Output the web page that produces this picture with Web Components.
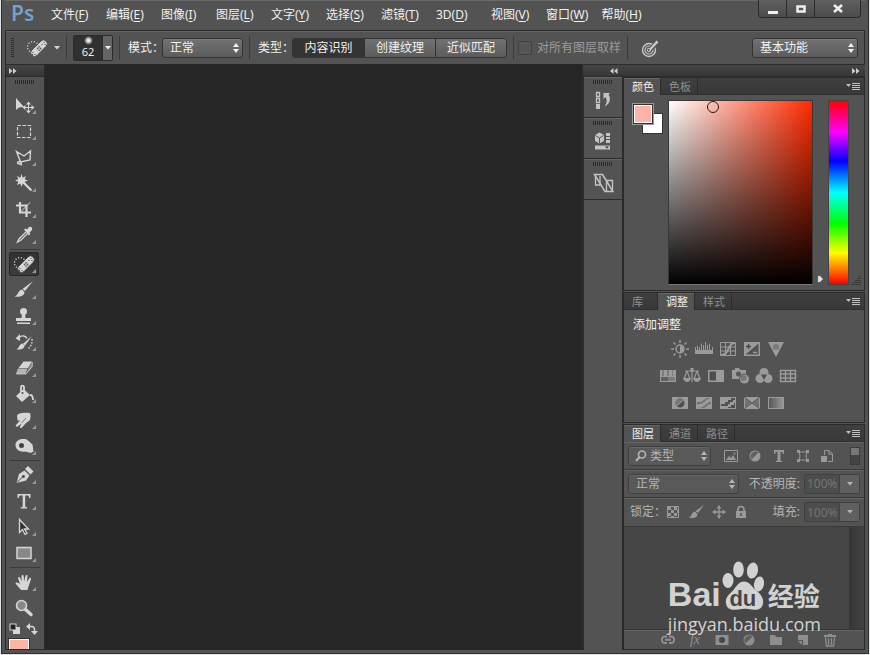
<!DOCTYPE html>
<html lang="zh-CN">
<head>
<meta charset="utf-8">
<title>Ps</title>
<style>
html, body { height: 100%; }
body {
  margin: 0;
  background: #dfe3e8;
  color: #f0f0f0;
  font: 12px/16px "Noto Sans", "Noto Sans CJK SC", sans-serif;
  --face: #535353;
  --edge: #2b2b2b;
  --light: #666;
}
</style>
</head>
<body>
<ps-app></ps-app>

<script>
// name: [width, height, markup]
const ICONS = {
  // tools, drawn in the 30x26 tool cell
  move: [30, 26, '<path d="M7 6v12l3-2.500 5-.5z"/><path d="M19.500 10.500v10M14.500 15.500h10" stroke="currentColor"/><path d="M19.500 9.500l2.500 3h-5zM19.500 21.500l2.500-3h-5zM13.500 15.500l3-2.500v5zM25.500 15.500l-3-2.500v5z"/>'],
  marquee: [30, 26, '<rect x="8.500" y="7.500" width="13" height="12" fill="none" stroke="currentColor" stroke-width="1.200" stroke-dasharray="3.500 1.500"/>'],
  lasso: [30, 26, '<path d="M7.500 7.500l7.500 4.500 6.500-5-.5 9-9.500 2zM11 18c-2.500-1-3.500 1.500-1 2 2 .3 3-2.500 1-2zM12 18.500l.5 3" fill="none" stroke="currentColor" stroke-width="1.400"/>'],
  wand: [30, 26, '<path d="M12.500 4l1.200 3.700L17 6l-1.300 3.300 3.300 1.200-3.300 1.200L17 15l-3.300-1.500-1.200 3.500-1.200-3.500L8 15l1.300-3.300L6 10.500l3.300-1.200L8 6l3.300 1.700z"/><path d="M15 13l7.500 7.500" stroke="currentColor" stroke-width="2.200"/>'],
  crop: [30, 26, '<path d="M11 6v10.500h11M7 9.500h10.500V21" fill="none" stroke="currentColor" stroke-width="2.200"/><path d="M12 15.500L21 6.500" stroke="currentColor"/>'],
  dropper: [30, 26, '<path d="M17 10l-7 7-1.500 3 3-1.500 7-7" fill="none" stroke="currentColor" stroke-width="1.300"/><path d="M15 7.500l1.500-1 1.500 1 2-2.500c2-1 4 1 3 3l-2.500 2.500.8 1.500-1.300 1.500z"/>'],
  heal: [30, 26, '<circle cx="11" cy="12" r="5.500" fill="none" stroke="currentColor" stroke-width="1.200" stroke-dasharray="1.200 1.700"/><rect x="7" y="9.500" width="20" height="7.500" rx="3.500" transform="rotate(-45 17 13.250)" stroke="#3d3d3d" stroke-width=".8"/><path d="M14 13l3-3 3.500 3.500-3 3z" fill="#b0b0b0"/><path d="M17 11.500v1M15.500 13.200v1M18.500 13.200v1M17 14.800v1M22 7v1M20 9v1M23 9v1M11 17v1M13 19v1M10.500 19v1" stroke="#444"/>'],
  brush: [30, 26, '<path d="M24 4l-8 10-2.500-2z"/><path d="M13 12.500l2.500 2.500c0 4-5 5.500-10 4.500 4-1 3.500-6.500 7.500-7z"/>'],
  stamp: [30, 26, '<circle cx="14.500" cy="8.500" r="3.500"/><path d="M13 11h3l.5 4h5.500v3H7v-3h5.500zM8 19.500h13V21H8z"/>'],
  history: [30, 26, '<path d="M23 7l-7 9.500-2-1.800z"/><path d="M13.500 14.500l2.200 2c-.5 3.500-4 4.500-8.500 4 3-1 3-5.500 6.300-6z"/><path d="M10 8.500c3-2.500 7-2 8 1" fill="none" stroke="currentColor" stroke-width="1.400"/><path d="M23 10c.5 4-1 7.500-4.500 10.500" fill="none" stroke="currentColor" stroke-width="1.500" stroke-dasharray="1.500 1.500"/><path d="M6.500 9.500l4.500-4.500v7z"/>'],
  eraser: [30, 26, '<path d="M14.500 6.500h8.500l-4 6.500H9.500z"/><path d="M9 13.500h9.500L16.500 19H7z" fill="#b4b4b4"/><path d="M19.500 13L23.500 7v4.500L17.500 19z" fill="#8a8a8a"/><path d="M7.500 19h9.500l6.200-7.500V7" fill="none" stroke="currentColor" stroke-width=".8"/>'],
  bucket: [30, 26, '<path d="M14.500 8l6.500 6-8 7-6-6z"/><path d="M12 12V6.500c0-2.500 3-2.500 3 0V12M21 14c2 0 3 1 3 5" fill="none" stroke="currentColor" stroke-width="1.800"/><circle cx="13.500" cy="12" r="1" fill="#444"/>'],
  smudge: [30, 26, '<path d="M8 9c1-3 5-3.500 13-3 .8 3 .8 5-.5 7.500L17 16l-4.500 5-1.800-.3 1.600-4-4.300 3.300L6.500 18.500l4.500-5H8.500z"/><path d="M17 11l-4.500 5" stroke="#777"/>'],
  sponge: [30, 26, '<path d="M6.500 12c0-4 4-6.500 8-6 4 0 5 2 9 5.500l1 7-3 1.500-5-1.500c-5 1-10-1.500-10-6.500z"/><circle cx="12.500" cy="12.500" r="2.500" fill="#444"/>'],
  pen: [30, 26, '<path d="M7.500 21l2.500-9 5.500-3.500 5 5-3.500 5z"/><path d="M16 7l3-3 5.500 5.500-3 3z"/><path d="M8 20.500l6-6" stroke="#444"/><circle cx="14.500" cy="14.500" r="1.400" fill="#444"/>'],
  type: [30, 26, '<path d="M8.500 6h13v4h-1.200c-.3-2-1-2.500-2.300-2.500h-1.800V18c0 1 .5 1.200 2 1.300v1.200h-6.500v-1.200c1.600-.1 2-.3 2-1.300V7.500H12c-1.400 0-2 .5-2.300 2.500H8.500z"/>'],
  select: [30, 26, '<path d="M10.500 5.500v13l3-3 2.500 5 2-1-2.500-4.500h4z" fill="#333" stroke="currentColor" stroke-width="1.300"/>'],
  rect: [30, 26, '<rect x="8" y="7.500" width="14" height="11" fill="#888" stroke="currentColor" stroke-width="1.500"/>'],
  hand: [30, 26, '<path d="M12 21l-5.500-6.500c0-1.500 2-1.500 4.500.5L9 9c0-1.500 1.800-1.500 2.200 0l1.300 3.500V7c0-1.500 2-1.500 2.200 0l.4 5.200L16.500 7c.3-1.500 2.200-1.300 2 .2L18 13l2.200-3.500c.8-1.300 2.300-.5 1.800.8l-2.500 7.200-1 3.500z"/>'],
  zoom: [30, 26, '<path d="M16.500 14.500l5.500 5" stroke="currentColor" stroke-width="3.500" stroke-linecap="round"/><circle cx="12.500" cy="10.500" r="5" fill="#888" stroke="currentColor" stroke-width="1.600"/>'],
  defaults: [12, 12, '<rect x="4" y="4" width="7" height="7"/><rect x="1" y="1" width="6" height="6" fill="#222" stroke="currentColor"/>'],
  swap: [12, 12, '<path d="M3 3.500h2.500q3 0 3 3V9" fill="none" stroke="currentColor" stroke-width="1.400"/><path d="M0 3.500L4 0v7zM5 8h7l-3.500 4z"/>'],

  // small marks
  caret: [6, 4, '<path d="M0 0h6L3 3.500z"/>'],
  updown: [6, 10, '<path d="M0 4h6L3 0zM0 6h6l-3 4z"/>'],
  left: [8, 6, '<path d="M3.500 0v6L0 3zM7.500 0v6L4 3z"/>'],
  right: [8, 6, '<path d="M0 0v6l3.500-3zM4 0v6l3.500-3z"/>'],
  menu: [14, 10, '<path d="M0 2h5L2.500 5z"/><path d="M6 1.500h8M6 3.500h8M6 5.500h8M6 7.500h8" stroke="currentColor"/>'],
  resize: [10, 10, '<path d="M9 1v1M7 3v1M9 3v1M5 5v1M7 5v1M9 5v1M3 7v1M5 7v1M7 7v1M9 7v1M1 9v1M3 9v1M5 9v1M7 9v1M9 9v1" stroke="#1d1d1d"/>'],
  marker: [7, 8, '<path d="M.5.500H3l3.500 3.500L3 7.500H.5z" stroke="#333" stroke-width=".6"/>'],
  min: [12, 12, '<path d="M1 8h10v3H1z"/>'],
  max: [12, 12, '<path d="M2.500 3.500h7v5h-7z" fill="none" stroke="currentColor" stroke-width="2.500"/>'],
  close: [12, 12, '<path d="M2 2l8 7M10 2L2 9" stroke="currentColor" stroke-width="2.600"/>'],
  target: [20, 20, '<circle cx="8" cy="12" r="6.500" fill="none" stroke="currentColor" stroke-width="1.400"/><circle cx="8" cy="12" r="4" fill="none" stroke="currentColor" stroke-width="1.200"/><circle cx="8" cy="12" r="1.800" fill="none" stroke="currentColor"/><path d="M10 11L17 3.500" stroke="#535353" stroke-width="4.500"/><path d="M8 13l1-3 6.500-7.500 2 1.700-7 7.300z"/>'],

  // collapsed panels
  historyPanel: [22, 22, '<path d="M4.500 2.500h3v4h-3zM4.500 8.500h3v4h-3z" fill="none" stroke="currentColor" stroke-width="1.300"/><path d="M4 14h4v5H4z"/><path d="M11.500 9V3h6.500l-1.500 1.500c2.800 4.500 1.500 9.500-4 12 2.500-3.500 3-6.500 1-9.500z"/>'],
  properties: [22, 22, '<path d="M7.500 1.500L12 4v6l-4.500 2.500L3 10V4z"/><path d="M3.500 4.500l4 2.500 4-2.500M7.500 7v5" fill="none" stroke="#555"/><path d="M14 2h4v3h-4zM14 6h4v2h-4zM14 9h4v3h-4zM3 14.500h15v4H3z"/><path d="M13 15.500h4l-2 2z" fill="#333"/>'],
  paths: [22, 22, '<path d="M2.500 2.500h8l10.500 17h-8z" fill="none" stroke="currentColor" stroke-width="1.500"/><path d="M3.500 3v10H8V4M14.500 8.500h6V18M14.500 9v10" fill="none" stroke="currentColor" stroke-width="1.300"/>'],

  // adjustments
  brightness: [18, 18, '<circle cx="9" cy="9" r="4" fill="none" stroke="currentColor" stroke-width="1.500"/><path d="M9 5v8a4 4 0 000-8z"/><path d="M9 0v3M9 15v3M0 9h3M15 9h3M2.500 2.500l2 2M13.500 13.500l2 2M2.500 15.500l2-2M13.500 4.500l2-2" stroke="currentColor" stroke-width="1.500"/>'],
  levels: [18, 18, '<path d="M0 10h18v4H0z"/><path d="M.5 11V7M2.500 11V5.500M4.500 11V7M6.500 11V3.500M8.500 11V5M10.500 11V2M12.500 11V5M14.500 11V3.500M17.500 11V7" stroke="currentColor"/>'],
  curves: [18, 18, '<path d="M1.500 2.500h15v13h-15zM6.500 3v12M11.500 3v12M2 7h14M2 11h14" fill="none" stroke="currentColor"/><path d="M2 15c9 0 6-12 14-12" fill="none" stroke="currentColor" stroke-width="2"/>'],
  exposure: [18, 18, '<path d="M1 2h16v14H1z"/><path d="M15.500 3.500v11h-13z" fill="#535353"/><path d="M3 6.500h5M5.500 4v5" stroke="#444" stroke-width="1.300"/><path d="M10 12.500h4" stroke="currentColor" stroke-width="1.500"/>'],
  vibrance: [18, 18, '<path d="M1 2h16L9 17z"/><circle cx="9" cy="7" r="3" fill="#7a7a7a"/>'],
  hue: [18, 18, '<path d="M1 3h16v12H1z"/><path d="M3 3h2v6H3zM8 3h2v6H8zM13 3h1v6h-1z" fill="#7c7c7c"/><path d="M2 10h14v4H2z" fill="#606060"/><path d="M9 10h7v4H9z" fill="#7c7c7c"/>'],
  balance: [18, 18, '<path d="M9 1v14M2 4h14M4 4l-3 8M4 4l3 8M14 4l-3 8M14 4l3 8" fill="none" stroke="currentColor" stroke-width="1.200"/><path d="M7.500 1h3v4h-3zM0 11h8q-1 4-4 4t-4-4M10 11h8q-1 4-4 4t-4-4"/>'],
  bw: [18, 18, '<path d="M1 3h16v12H1z"/><path d="M2.500 4.500H9v9H2.500z" fill="#505050"/>'],
  photo: [20, 18, '<path d="M1 3h3V1h4l1 2h6v9H1z"/><circle cx="7.500" cy="7" r="2.500" fill="#555"/><circle cx="13.500" cy="12" r="5" stroke="#555"/><circle cx="12.500" cy="11" r="3" fill="#777"/>'],
  mixer: [18, 18, '<circle cx="9" cy="5.500" r="4.500"/><circle cx="5" cy="11.500" r="4.500"/><circle cx="13" cy="11.500" r="4.500"/><path d="M6 7.500h6L9 13z" fill="#505050"/>'],
  lookup: [18, 18, '<path d="M1.500 3.500h15v11h-15zM6.500 3v12M11.500 3v12M2 7h14M2 11h14" fill="none" stroke="currentColor" stroke-width="1.400"/>'],
  invert: [18, 18, '<path d="M1 3h16v12H1z"/><circle cx="9" cy="9" r="4.500" fill="#505050"/><path d="M5.800 12.200a4.500 4.500 0 016.400-6.400z" fill="#777"/><path d="M3 14L15 4" stroke="currentColor"/>'],
  poster: [18, 18, '<path d="M1 3h16v12H1z"/><path d="M2 8c7 1 7-4 11-4h3c-6 1-6 6-14 6.500zM3 14c7 0 8-6 13-6v2c-4 0-4 4-9 4z" fill="#707070"/>'],
  threshold: [18, 18, '<path d="M1 3h16v12H1z"/><path d="M2 10h4V8h3V6h3V4h4v2h-2v2h-3v2H9v2H2zM9 14v-1h3v-2h3V9h1v5z" fill="#505050"/>'],
  selective: [18, 18, '<path d="M1 3h16v12H1z"/><path d="M2 4l6.500 5L2 14zM16 4L9.500 9l6.500 5z" fill="#707070"/><path d="M1 3l16 12M17 3L1 15" stroke="#5a5a5a"/>'],
  gradient: [18, 18, '<defs><linearGradient id="g"><stop stop-color="#555"/><stop offset="1" stop-color="#999"/></linearGradient></defs><rect x="1.500" y="3.500" width="15" height="11" fill="url(#g)" stroke="currentColor"/>'],

  // layers
  search: [14, 14, '<circle cx="8" cy="5.500" r="3.500" fill="none" stroke="currentColor" stroke-width="1.700"/><path d="M5.500 8L2 12" stroke="currentColor" stroke-width="2"/>'],
  image: [14, 14, '<path d="M.5 1.500h13v11H.5z" fill="none" stroke="currentColor"/><path d="M2 11l3-4 2 2 2-3 3 5z"/><circle cx="10.500" cy="4.500" r="1"/>'],
  half: [14, 14, '<circle cx="7" cy="7" r="5.500"/><path d="M3.500 10.500A5 5 0 0110.500 3.500z" fill="#606060"/>'],
  letter: [14, 14, '<path d="M2 1h10v4h-1c-.3-1.800-.8-2.200-2.500-2.200V11c0 .8.400 1 1.500 1v1H4v-1c1.100 0 1.500-.2 1.500-1V2.800C3.800 2.800 3.300 3.200 3 5H2z"/>'],
  shape: [14, 14, '<path d="M3 3h8l-1 4 1 4H3l1-4z" fill="none" stroke="currentColor"/><path d="M1 1h3v3H1zM10 1h3v3h-3zM1 10h3v3H1zM10 10h3v3h-3z"/>'],
  smart: [14, 14, '<path d="M4.500 6V1.500H9L12.500 5v7.500H8M9 1.500V5h3.500" fill="none" stroke="currentColor"/><path d="M1 7h6v6H1z"/>'],
  checker: [14, 14, '<path d="M1.500 1.500h11v11h-11z" fill="none" stroke="currentColor"/><path d="M2 2h3v3H2zM8 2h3v3H8zM5 5h3v3H5zM2 8h3v3H2zM8 8h3v3H8zM11 5h2v3h-2zM5 11h3v2H5z"/>'],
  paint: [16, 14, '<path d="M16 0l-6 8-2.500-2z"/><path d="M7 6.500L9.500 9c0 4-5 4.500-9 4 3-1 3-6 6.500-6.500z"/>'],
  pan: [14, 14, '<path d="M7 2v10M2 7h10" stroke="currentColor" stroke-width="1.300"/><path d="M7 0l2.500 3.500h-5zM7 14l2.500-3.500h-5zM0 7l3.500-2.500v5zM14 7l-3.500-2.500v5z"/>'],
  lock: [14, 14, '<path d="M2 6h10v7H2z"/><path d="M4 6.500V4.500a3 3 0 016 0v2" fill="none" stroke="currentColor" stroke-width="1.700"/><path d="M7 8v3" stroke="#505050" stroke-width="1.500"/>'],
  link: [14, 14, '<path d="M6 3.500H4a3.200 3.200 0 000 6.500h2M8 3.500h2a3.200 3.200 0 010 6.500H8M4 6.700h6" fill="none" stroke="currentColor" stroke-width="1.900"/>'],
  mask: [14, 14, '<path d="M.5 2h13v10H.5z"/><circle cx="7" cy="7" r="3" fill="#484848"/>'],
  folder: [14, 14, '<path d="M1 2h5l1 2h6v8H1z"/>'],
  page: [14, 14, '<path d="M2 2h10v10H7V7H2z"/><path d="M2 8h4v4z"/>'],
  trash: [14, 14, '<path d="M5 1h4v1h4v2H1V2h4z"/><path d="M2.500 4.500l1 8.500h7l1-8.500M5.500 5v7M8.500 5v7" fill="none" stroke="currentColor" stroke-width="1.300"/>']
};

const RESET = `
* { box-sizing: border-box; }
button { margin: 0; padding: 0; border: 0; background: none; color: inherit; font: inherit; }
select, input { margin: 0; font: inherit; color: inherit; }
`;

class PsElement extends HTMLElement {
  connectedCallback() {
    if (this.shadowRoot) return;
    const shadow = this.attachShadow({mode: 'open'});
    shadow.innerHTML = `<style>${RESET}${this.css()}</style>${this.html()}`;
  }
  css() { return ''; }
  html() { return '<slot></slot>'; }
}

class PsIcon extends PsElement {
  css() { return ':host { display: inline-flex; flex: none; } svg { display: block; }'; }
  html() {
    const [w, h, art] = ICONS[this.getAttribute('name')];
    return `<svg width="${w}" height="${h}" viewBox="0 0 ${w} ${h}" fill="currentColor" aria-hidden="true">${art}</svg>`;
  }
}

class PsMenuBar extends PsElement {
  css() {
    return `
:host { display: flex; height: 30px; padding-left: 6px; box-shadow: inset 0 1px #6a6a6a; }
.logo { width: 36px; color: #74a3d3; font: 600 21px/27px "Open Sans", sans-serif; }
nav { display: flex; flex: 1; gap: 1px; }
nav button { min-width: 54px; padding: 0 8px 0 4px; line-height: 28px; white-space: nowrap; text-align: left; }
u { text-underline-offset: 2px; }
.win { display: flex; height: 18px; margin-right: 4px; border: 1px solid var(--edge); border-top: 0; border-radius: 0 0 4px 4px; background: linear-gradient(#606060, #4c4c4c); }
.win button { display: grid; place-items: center; width: 28px; border-right: 1px solid var(--edge); }
.win button:last-child { width: 45px; border: 0; }
`;
  }
  html() {
    const items = ['文件F', '编辑E', '图像I', '图层L', '文字Y', '选择S', '滤镜T', '3DD', '视图V', '窗口W', '帮助H'];
    return `<div class="logo">Ps</div>
<nav>${items.map(t => `<button>${t.slice(0, 2)}(<u>${t[2]}</u>)</button>`).join('')}</nav>
<div class="win">
  <button aria-label="min"><ps-icon name="min"></ps-icon></button>
  <button aria-label="max"><ps-icon name="max"></ps-icon></button>
  <button aria-label="close"><ps-icon name="close"></ps-icon></button>
</div>`;
  }
}

class PsSelect extends PsElement {
  css() {
    return `
:host { display: block; color: inherit; }
label { display: flex; align-items: center; height: 100%; }
.text { width: 34px; flex: none; white-space: nowrap; }
.box { display: grid; flex: 1; align-items: center; height: 20px; }
.box > * { grid-area: 1 / 1; }
select {
  width: 100%; height: 20px; padding: 0 7px; appearance: none;
  border: 1px solid #333; border-radius: 3px; outline: 0;
  background: linear-gradient(#727272, #5c5c5c);
  box-shadow: inset 0 1px #7c7c7c;
}
:host([dim]) select { background: #595959; border-color: #404040; box-shadow: inset 0 1px #666; }
:host([icon]) select { padding-left: 21px; }
.arrows { justify-self: end; margin-right: 4px; pointer-events: none; }
.lead { justify-self: start; margin-left: 6px; pointer-events: none; }
`;
  }
  html() {
    const label = this.getAttribute('label');
    const icon = this.getAttribute('icon');
    return `<label>${label ? `<span class="text">${label}</span>` : ''}
<span class="box"><select><option>${this.getAttribute('value')}</option></select>
${icon ? `<ps-icon class="lead" name="${icon}"></ps-icon>` : ''}
<ps-icon class="arrows" name="updown"></ps-icon></span></label>`;
  }
}

class PsOptionsBar extends PsElement {
  css() {
    return `
:host { display: flex; align-items: center; gap: 6px; height: 34px; padding: 0 6px 0 5px; border: 1px solid var(--edge); border-width: 1px 1px 0; box-shadow: inset 0 1px var(--light); white-space: nowrap; }
.grip { width: 3px; height: 20px; background: repeating-linear-gradient(#2e2e2e 0 1px, transparent 1px 2px); }
.sep { width: 1px; height: 23px; background: #3a3a3a; }
.tool { display: flex; align-items: center; gap: 2px; width: 40px; padding-left: 2px; color: #d6d6d6; }
.brush { display: grid; grid-template-columns: 1fr 10px; width: 40px; height: 26px; border: 1px solid var(--edge); border-radius: 2px; background: #303030; }
.tip { display: grid; justify-items: center; align-content: center; line-height: 14px; font-size: 11px; }
.dot { width: 9px; height: 9px; border-radius: 50%; background: radial-gradient(#fff, #ccc 30%, transparent 70%); }
.drop { display: grid; place-items: center; background: #646464; border-left: 1px solid var(--edge); }
ps-select { width: 117px; padding-left: 2px; }
ps-select.work { width: 106px; padding: 0; margin-left: auto; }
.type { display: flex; align-items: center; padding-left: 2px; }
.type span { width: 34px; }
.seg { display: flex; height: 20px; border: 1px solid #333; border-radius: 3px; background: linear-gradient(#717171, #5c5c5c); }
.seg button { width: 71px; border-left: 1px solid #333; }
.seg button:first-child { border: 0; background: #343434; }
.check { display: flex; align-items: center; gap: 5px; margin-left: -2px; color: #9c9c9c; }
.check input { width: 14px; height: 14px; appearance: none; border: 1px solid #404040; border-radius: 2px; background: #555; }
.pressure { width: 34px; display: grid; place-items: center; color: #c8c8c8; }
`;
  }
  html() {
    return `<span class="grip"></span>
<button class="tool" aria-label="tool"><ps-icon name="heal"></ps-icon><ps-icon name="caret"></ps-icon></button>
<span class="sep"></span>
<button class="brush"><span class="tip"><span class="dot"></span>62</span><span class="drop"><ps-icon name="caret"></ps-icon></span></button>
<span class="sep"></span>
<ps-select label="模式：" value="正常"></ps-select>
<span class="sep"></span>
<div class="type"><span>类型：</span><div class="seg"><button>内容识别</button><button>创建纹理</button><button>近似匹配</button></div></div>
<span class="sep"></span>
<label class="check"><input type="checkbox">对所有图层取样</label>
<span class="sep"></span>
<button class="pressure" aria-label="pressure"><ps-icon name="target"></ps-icon></button>
<ps-select class="work" value="基本功能"></ps-select>`;
  }
}

class PsGrip extends PsElement {
  css() {
    return `:host { display: block; width: 20px; height: 4px; margin: 0 auto; background: repeating-linear-gradient(90deg, #2c2c2c 0 1px, transparent 1px 2px); }`;
  }
  html() { return ''; }
}

class PsToolbox extends PsElement {
  css() {
    return `
:host { display: flex; flex-direction: column; width: 40px; box-sizing: border-box; overflow: hidden; border: 1px solid var(--edge); background: var(--face); color: #d6d6d6; }
header { flex: none; display: flex; align-items: center; height: 12px; padding: 0 3px; background: linear-gradient(#454545, #363636); border-bottom: 1px solid var(--edge); color: #ccc; }
button { display: grid; place-content: center; }
ps-grip { margin: 3px auto 8px; flex: none; }
.tool { position: relative; flex: none; width: 30px; height: 26px; margin-left: 3px; }
.tool::after { content: ""; position: absolute; right: 3px; bottom: 4px; border: 2px solid; border-color: transparent #999 #999 transparent; }
.tool.on { height: 24px; margin-top: 1px; margin-bottom: 1px; background: linear-gradient(#303030, #3c3c3c); border-radius: 3px; box-shadow: inset 0 0 0 1px #262626; }
.tool.on::after { bottom: 3px; }
.tool.plain::after { display: none; }
hr { flex: none; width: 30px; height: 1px; margin: 1px 4px; border: 0; background: #3a3a3a; }
.mini { flex: none; display: flex; justify-content: space-between; padding: 2px 6px 4px 3px; }
.color { flex: none; width: 20px; height: 20px; margin-left: 3px; border: 1px solid #fff; outline: 1px solid #333; background: #ffb5a5; }
`;
  }
  html() {
    const groups = [
      ['move', 'marquee', 'lasso', 'wand', 'crop', 'dropper'],
      ['heal', 'brush', 'stamp', 'history', 'eraser', 'bucket', 'smudge', 'sponge'],
      ['pen', 'type', 'select', 'rect'],
      ['hand', 'zoom']
    ];
    const cls = {heal: 'on', zoom: 'plain'};
    const tools = groups.map(g => g.map(n =>
      `<button class="tool ${cls[n] || ''}" aria-label="${n}"><ps-icon name="${n}"></ps-icon></button>`).join('')).join('<hr>');
    return `<header><button aria-label="expand"><ps-icon name="right"></ps-icon></button></header>
<ps-grip></ps-grip>${tools}
<div class="mini"><ps-icon name="defaults"></ps-icon><ps-icon name="swap"></ps-icon></div>
<button class="color" aria-label="color"></button>`;
  }
}

class PsIconDock extends PsElement {
  css() {
    return `
:host { display: block; border: solid var(--edge); border-width: 0 1px; background: var(--face); color: #c4c4c4; }
div { height: 41px; padding-top: 3px; border-bottom: 1px solid var(--edge); box-shadow: inset 0 1px var(--light); }
button { display: grid; margin: 6px auto 0; }
`;
  }
  html() {
    return ['historyPanel', 'properties', 'paths'].map(n =>
      `<div><ps-grip></ps-grip><button aria-label="${n}"><ps-icon name="${n}"></ps-icon></button></div>`).join('');
  }
}

class PsPanel extends PsElement {
  css() {
    return `
:host { display: flex; flex-direction: column; border: 1px solid var(--edge); background: var(--face); }
header { display: flex; flex: none; height: 17px; background: linear-gradient(#3f3f3f, #383838); box-shadow: inset 0 -1px #2f2f2f; }
header button { min-width: 34px; padding: 0 6px 0 8px; border-right: 1px solid var(--edge); color: #8f8f8f; font-size: 11px; line-height: 17px; text-align: left; }
header .on { background: var(--face); box-shadow: inset 0 1px var(--light); color: #f0f0f0; }
header .more { margin-left: auto; min-width: 0; padding: 0 4px 0 0; border: 0; color: #c0c0c0; display: grid; align-items: center; }
`;
  }
  html() {
    const on = this.getAttribute('selected');
    const tabs = this.getAttribute('tabs').split(' ');
    return `<header>${tabs.map(t => `<button class="${t === on ? 'on' : ''}">${t}</button>`).join('')}
<button class="more" aria-label="menu"><ps-icon name="menu"></ps-icon></button></header><slot></slot>`;
  }
}

class PsColorPicker extends PsElement {
  css() {
    return `
:host { display: flex; height: 195px; box-sizing: border-box; padding: 5px 3px 5px 8px; }
.swatches { position: relative; width: 36px; flex: none; }
.swatches i { position: absolute; width: 21px; height: 21px; border: 1px solid #333; background: #fff; top: 13px; left: 10px; }
.swatches .front { top: 3px; left: 0; width: 22px; height: 22px; border-color: #999; background: #fbb4a5; box-shadow: inset 0 0 0 1px #333, inset 0 0 0 2px #fff; }
.field { position: relative; flex: 1; border: 1px solid #383838; border-bottom-color: #777; background: linear-gradient(transparent, #000), linear-gradient(90deg, #fff, #ff2a00); }
.ring { position: absolute; left: 38px; top: 0; width: 12px; height: 12px; border: 1px solid #2a1a18; border-radius: 50%; }
.mark { width: 15px; display: flex; align-items: flex-end; justify-content: center; color: #ddd; padding-bottom: 2px; }
input {
  width: 21px; height: 100%; flex: none; appearance: none; writing-mode: vertical-lr; outline: 0;
  border: 1px solid #444;
  background: linear-gradient(#f00, #f0f 17%, #00f 33%, #0ff 50%, #0f0 67%, #ff0 83%, #f00);
}
input::-webkit-slider-thumb { appearance: none; width: 1px; height: 1px; opacity: 0; }
.corner { margin-left: 2px; align-self: flex-end; }
`;
  }
  html() {
    return `<div class="swatches"><i></i><i class="front"></i></div>
<div class="field"><span class="ring"></span></div>
<div class="mark"><ps-icon name="marker"></ps-icon></div>
<input type="range" aria-label="hue" min="0" max="360" value="351">
<ps-icon class="corner" name="resize"></ps-icon>`;
  }
}

class PsAdjustments extends PsElement {
  css() {
    return `
:host { display: block; height: 112px; box-sizing: border-box; padding: 7px 8px 5px; }
p { margin: 0 0 7px 1px; }
div { display: flex; justify-content: center; gap: 6px; height: 27px; padding-right: 32px; color: #9b9b9b; }
button { display: grid; place-items: center; width: 18px; height: 18px; }
`;
  }
  html() {
    const rows = [
      ['brightness', 'levels', 'curves', 'exposure', 'vibrance'],
      ['hue', 'balance', 'bw', 'photo', 'mixer', 'lookup'],
      ['invert', 'poster', 'threshold', 'selective', 'gradient']
    ];
    return '<p>添加调整</p>' + rows.map(r => `<div>${r.map(n =>
      `<button aria-label="${n}"><ps-icon name="${n}"></ps-icon></button>`).join('')}</div>`).join('');
  }
}

class PsLayers extends PsElement {
  css() {
    return `
:host { display: flex; flex: 1; flex-direction: column; min-height: 0; color: #b4b4b4; }
.row { display: flex; flex: none; align-items: center; height: 28px; padding: 0 4px; border-bottom: 1px solid #3a3a3a; box-shadow: inset 0 1px #636363; }
.icons { display: flex; gap: 10px; color: #999; }
.icons button { display: grid; }
.filter ps-select { width: 83px; }
.filter .icons { margin-left: 13px; }
.toggle { width: 10px; height: 18px; margin-left: auto; border: 1px solid #3c3c3c; background: linear-gradient(#777 45%, #444 45%); }
.blend ps-select { width: 111px; }
.num { display: flex; align-items: center; gap: 4px; margin-left: auto; white-space: nowrap; }
.num input { width: 36px; height: 20px; padding: 0 2px; border: 1px solid #404040; border-radius: 2px 0 0 2px; background: #4d4d4d; color: #747474; }
.num button { display: grid; place-items: center; width: 20px; height: 20px; margin-left: -4px; border: 1px solid #404040; border-left: 0; border-radius: 0 2px 2px 0; background: #606060; }
.lock { height: 29px; padding-left: 6px; }
.lock .icons { gap: 8px; }
.list { display: flex; flex: 1; justify-content: flex-end; background: #464646; }
.scroll { width: 15px; background: linear-gradient(90deg, #363636, #424242); }
.foot { height: 20px; flex: none; justify-content: center; gap: 13px; padding: 1px 0 0 10px; border: 0; border-top: 1px solid #363636; color: #8e8e8e; }
.foot button { min-width: 14px; display: grid; place-items: center; }
em { font: italic 14px/12px "Liberation Serif", serif; }
`;
  }
  html() {
    const icons = names => names.map(n => `<button aria-label="${n}"><ps-icon name="${n}"></ps-icon></button>`).join('');
    const num = (id, text) => `<div class="num"><label for="${id}">${text}</label><input id="${id}" value="100%"><button aria-label="${id}"><ps-icon name="caret"></ps-icon></button></div>`;
    return `<div class="row filter"><ps-select dim icon="search" value="类型"></ps-select>
<div class="icons">${icons(['image', 'half', 'letter', 'shape', 'smart'])}</div><button class="toggle" aria-label="filter"></button></div>
<div class="row blend"><ps-select dim value="正常"></ps-select>${num('opacity', '不透明度:')}</div>
<div class="row lock"><span>锁定：</span><div class="icons">${icons(['checker', 'paint', 'pan', 'lock'])}</div>${num('fill', '填充:')}</div>
<div class="list"><div class="scroll"></div></div>
<div class="row foot">${icons(['link'])}<button><em>fx</em></button>${icons(['mask', 'half', 'folder', 'page', 'trash'])}</div>`;
  }
}

class PsWatermark extends PsElement {
  css() {
    return `
:host { display: block; color: #d2d2d2; white-space: nowrap; pointer-events: none; }
.brand { display: flex; align-items: flex-end; height: 50px; margin-bottom: 4px; }
.bai { width: 54px; font: bold 34px/34px "Liberation Sans", sans-serif; }
.paw { display: grid; width: 42px; height: 50px; }
.paw > * { grid-area: 1 / 1; }
.paw span { align-self: end; justify-self: center; color: #464646; font: bold 22px/24px "Liberation Sans", sans-serif; }
.cn { margin-left: 4px; font: bold 26px/32px "Noto Sans CJK SC", sans-serif; }
.url { font: 500 18px/18px "Open Sans", sans-serif; }
`;
  }
  html() {
    return `<div class="brand"><span class="bai">Bai</span>
<span class="paw"><svg width="42" height="50" viewBox="0 0 42 50" fill="currentColor"><ellipse cx="6" cy="19.500" rx="5.500" ry="7.500"/><ellipse cx="16.500" cy="8.500" rx="5.300" ry="8"/><ellipse cx="30.500" cy="9.500" rx="5.500" ry="8" transform="rotate(10 30.500 9.500)"/><ellipse cx="37" cy="23" rx="5" ry="7.500" transform="rotate(10 37 23)"/><path d="M22 20.500c5 0 7 4 11 8 5 4 9 8 8 14-1 6-6 7-11 6-6-1-9-1-14 0-6 1-11 0-12-6-1-6 3-9 7-13 4-5 6-9 11-9z"/></svg><span>du</span></span>
<span class="cn">经验</span></div>
<div class="url">jingyan.baidu.com</div>`;
  }
}

class PsApp extends PsElement {
  css() {
    return `
:host { display: flex; flex-direction: column; height: calc(100vh - 1px); box-sizing: border-box; margin: 0 1px 1px; padding: 0 3px 3px; border: 1px solid #303030; border-top: 0; background: var(--face); }
ps-menu-bar, ps-options-bar { flex: none; }
main { display: flex; flex: 1; min-height: 0; }
.canvas { flex: 1; background: #262626; }
.dock { display: grid; grid-template: 12px 1fr / 40px 242px; border: 1px solid var(--edge); border-width: 1px 0 0 1px; }
.dock header { grid-column: 1 / 3; display: flex; align-items: center; justify-content: space-between; padding: 0 5px 0 27px; background: linear-gradient(#454545, #363636); border-bottom: 1px solid var(--edge); color: #ccc; }
.dock header button { display: grid; }
.stack { position: relative; display: flex; flex-direction: column; gap: 1px; min-height: 0; }
.stack ps-panel:last-of-type { flex: 1; min-height: 0; }
ps-watermark { position: absolute; right: 44px; bottom: 17px; }
`;
  }
  html() {
    return `<ps-menu-bar></ps-menu-bar>
<ps-options-bar></ps-options-bar>
<main>
  <ps-toolbox></ps-toolbox>
  <section class="canvas"></section>
  <aside class="dock">
    <header><button aria-label="expand"><ps-icon name="left"></ps-icon></button><button aria-label="collapse"><ps-icon name="right"></ps-icon></button></header>
    <ps-icon-dock></ps-icon-dock>
    <div class="stack">
      <ps-panel tabs="颜色 色板" selected="颜色"><ps-color-picker></ps-color-picker></ps-panel>
      <ps-panel tabs="库 调整 样式" selected="调整"><ps-adjustments></ps-adjustments></ps-panel>
      <ps-panel tabs="图层 通道 路径" selected="图层"><ps-layers></ps-layers></ps-panel>
      <ps-watermark></ps-watermark>
    </div>
  </aside>
</main>`;
  }
}

customElements.define('ps-icon', PsIcon);
customElements.define('ps-grip', PsGrip);
customElements.define('ps-select', PsSelect);
customElements.define('ps-menu-bar', PsMenuBar);
customElements.define('ps-options-bar', PsOptionsBar);
customElements.define('ps-toolbox', PsToolbox);
customElements.define('ps-icon-dock', PsIconDock);
customElements.define('ps-panel', PsPanel);
customElements.define('ps-color-picker', PsColorPicker);
customElements.define('ps-adjustments', PsAdjustments);
customElements.define('ps-layers', PsLayers);
customElements.define('ps-watermark', PsWatermark);
customElements.define('ps-app', PsApp);
</script>
</body>
</html>
